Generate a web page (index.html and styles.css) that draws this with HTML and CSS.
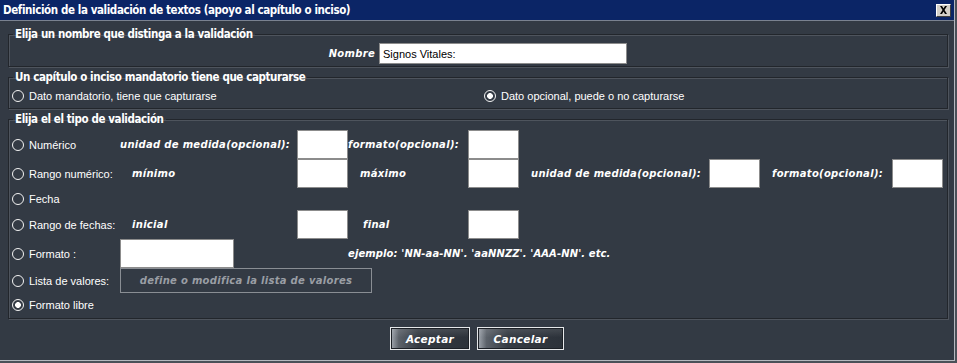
FILE: index.html
```html
<!DOCTYPE html>
<html lang="es">
<head>
    <meta charset="UTF-8">
    <title>Definición de la validación de textos</title>
    <link rel="stylesheet" href="styles.css">
</head>
<body>
    <div class="window">
        <div class="titlebar">
            <span class="title">Definición de la validación de textos (apoyo al capítulo o inciso)</span>
            <span class="close">
                <svg width="9" height="8" viewBox="0 0 9 8"><path d="M1 0h2l1.5 2.5L6 0h2L5.5 4 8 8H6L4.5 5.5 3 8H1l2.5-4z" fill="#000"/></svg>
            </span>
        </div>

        <div class="content">
            <fieldset class="panel panel-name">
                <legend>Elija un nombre que distinga a la validación</legend>
                <div class="name-row">
                    <span class="fancy name-label">Nombre</span>
                    <input class="text-input" type="text" value="Signos Vitales:">
                </div>
            </fieldset>

            <fieldset class="panel panel-mandatory">
                <legend>Un capítulo o inciso mandatorio tiene que capturarse</legend>
                <div class="choice-row">
                    <label class="option"><span class="radio"></span>Dato mandatorio, tiene que capturarse</label>
                    <label class="option"><span class="radio checked"></span>Dato opcional, puede o no capturarse</label>
                </div>
            </fieldset>

            <fieldset class="panel panel-type">
                <legend>Elija el el tipo de validación</legend>
                <div class="type-grid">
                    <!-- numérico -->
                    <label class="option"><span class="radio"></span>Numérico</label>
                    <span class="fancy">unidad de medida(opcional):</span>
                    <span class="box"></span>
                    <span class="fancy">formato(opcional):</span>
                    <span class="box"></span>
                    <span class="filler"></span>

                    <!-- rango numérico -->
                    <label class="option"><span class="radio"></span>Rango numérico:</label>
                    <span class="fancy indent">mínimo</span>
                    <span class="box"></span>
                    <span class="fancy indent">máximo</span>
                    <span class="box"></span>
                    <span class="fancy indent">unidad de medida(opcional):</span>
                    <span class="box"></span>
                    <span class="fancy indent">formato(opcional):</span>
                    <span class="box"></span>

                    <!-- fecha -->
                    <label class="option"><span class="radio"></span>Fecha</label>
                    <span class="filler"></span>

                    <!-- rango de fechas -->
                    <label class="option"><span class="radio"></span>Rango de fechas:</label>
                    <span class="fancy indent">inicial</span>
                    <span class="box"></span>
                    <span class="fancy indent-more">final</span>
                    <span class="box"></span>
                    <span class="filler"></span>

                    <!-- formato -->
                    <label class="option"><span class="radio"></span>Formato :</label>
                    <span class="box wide-box"></span>
                    <span class="fancy example">ejemplo: 'NN-aa-NN'. 'aaNNZZ'. 'AAA-NN'. etc.</span>

                    <!-- lista de valores -->
                    <label class="option"><span class="radio"></span>Lista de valores:</label>
                    <span class="list-btn-cell"><button class="list-btn" type="button">define o modifica la lista de valores</button></span>

                    <!-- formato libre -->
                    <label class="option"><span class="radio checked"></span>Formato libre</label>
                    <span class="filler"></span>
                </div>
            </fieldset>

            <div class="actions">
                <button class="dlg-btn btn-ok" type="button">Aceptar</button>
                <button class="dlg-btn btn-cancel" type="button">Cancelar</button>
            </div>
        </div>
    </div>
</body>
</html>
```

FILE: styles.css
```css
html, body {
    margin: 0;
    padding: 0;
    background-color: #4a5058;
}
.window {
    width: 954px;
    height: 360px;
    background-color: #333a44;
    border-right: 1px solid #b4b8be;
    border-bottom: 1px solid #b4b8be;
    font-family: "Liberation Sans", Arial, sans-serif;
    color: #fff;
}
.titlebar {
    height: 20px;
    background-color: #0b2566;
    border-bottom: 1px solid #7a8290;
    display: flex;
    align-items: center;
    justify-content: space-between;
    padding: 0 4px 0 3px;
}
.title {
    font-family: "DejaVu Sans Condensed", sans-serif;
    font-weight: bold;
    font-size: 11.5px;
    letter-spacing: -0.4px;
}
.close {
    width: 13px;
    height: 11px;
    background-color: #d4d0c8;
    border: 1px solid;
    border-color: #fff #404040 #404040 #fff;
    display: flex;
    align-items: center;
    justify-content: center;
    margin-right: -1px;
}
.content {
    padding: 6px 6px 0 8px;
}

/* etched group boxes */
.panel {
    box-sizing: border-box;
    margin: 0 0 3px 0;
    padding: 0 3px 0 3px;
    border: 1px solid #22262c;
    box-shadow: inset 1px 1px 0 #4e545d, 1px 1px 0 #4e545d;
    width: 940px;
}
.panel legend {
    font-family: "DejaVu Sans Condensed", sans-serif;
    font-weight: bold;
    font-size: 11.5px;
    letter-spacing: -0.4px;
    padding: 0 2px;
    margin-left: 1px;
    line-height: 14px;
}
.panel-name { height: 40px; }
.panel-mandatory { height: 39px; }
.panel-type { height: 207px; }

.name-row {
    display: grid;
    grid-template-columns: 367px 248px;
    align-items: center;
    padding-top: 2px;
}
.name-label {
    text-align: right;
    padding-right: 4px;
    font-size: 11px;
    letter-spacing: 0.6px;
}
.text-input {
    box-sizing: border-box;
    height: 21px;
    margin: 0;
    padding: 0 3px;
    border: 1px solid #8c8c8c;
    font-family: "Liberation Sans", Arial, sans-serif;
    font-size: 11px;
    color: #000;
    background: #fff;
}

.choice-row {
    display: grid;
    grid-template-columns: 472px 1fr;
    padding-top: 6px;
}
.option {
    display: flex;
    align-items: center;
    font-size: 11px;
    white-space: nowrap;
}
.radio {
    box-sizing: border-box;
    width: 12px;
    height: 12px;
    border: 1.5px solid #f4f4f4;
    border-radius: 50%;
    margin-right: 5px;
    flex: none;
}
.radio.checked {
    background: radial-gradient(circle, #fff 0 2.6px, #333a44 3.2px);
}

/* italic pixel-ish captions */
.fancy {
    font-family: "DejaVu Sans", Verdana, sans-serif;
    font-weight: bold;
    font-style: italic;
    font-size: 10px;
    letter-spacing: 0.3px;
    white-space: nowrap;
    color: #fff;
}
.indent { padding-left: 12px; }
.indent-more { padding-left: 15px; }

.type-grid {
    display: grid;
    grid-template-columns: 108px 177px 51px 120px 51px 190px 51px 132px 51px;
    grid-template-rows: 29px 29px 22px 29px 29px 25px 24px;
    align-items: center;
    padding-top: 4px;
}
.type-grid > .option + .filler { grid-column: 2 / -1; }
.filler { grid-column: span 4; }
.box {
    box-sizing: border-box;
    height: 29px;
    background: #fff;
    border: 1px solid #8c8c8c;
}
.wide-box {
    width: 114px;
}
.example {
    grid-column: 4 / -1;
    letter-spacing: 0.1px;
}
.list-btn-cell {
    grid-column: 2 / -1;
}
.list-btn {
    display: block;
    width: 252px;
    height: 25px;
    margin: 0;
    background: transparent;
    border: 1px solid #8a8e94;
    color: #9a9ea4;
    font-family: "DejaVu Sans", Verdana, sans-serif;
    font-weight: bold;
    font-style: italic;
    font-size: 10px;
    letter-spacing: 0.3px;
}

.actions {
    display: flex;
    justify-content: center;
    gap: 7px;
    padding-top: 5px;
    padding-right: 2px;
}
.dlg-btn {
    height: 23px;
    margin: 0;
    border: 1px solid #e6e8ea;
    color: #fff;
    font-family: "DejaVu Sans", Verdana, sans-serif;
    font-weight: bold;
    font-style: italic;
    font-size: 10.5px;
    letter-spacing: 0.3px;
    background:
        linear-gradient(180deg, rgba(255,255,255,0.12) 0, rgba(255,255,255,0) 45%),
        linear-gradient(90deg, #a2a8b0 0, #5c626a 10%, #353b43 35%, #2c323a 100%);
    box-shadow: inset 0 0 0 1px #1c2026;
}
.btn-ok { width: 80px; }
.btn-cancel { width: 87px; }
```
